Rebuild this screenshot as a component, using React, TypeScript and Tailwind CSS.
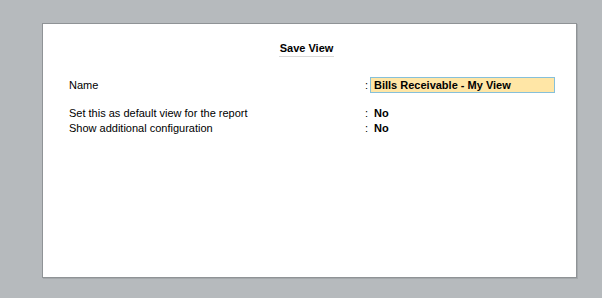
import React from "react";

export default function App() {
  const font = { fontFamily: '"Liberation Sans", Arial, sans-serif' };
  return (
    <div className="w-[602px] h-[298px] bg-[#b6babd] pt-[23px] pl-[42px]" style={font}>
      <div className="w-[535px] h-[255px] bg-white border border-[#8f9396] shadow-[1px_1px_0_#a4a8ab] flex flex-col">
        <div className="flex justify-center pt-[17px]">
          <div className="text-[11px] font-bold text-black leading-[14px] pb-[1px] border-b border-[#d9d9d9] px-[1px] -ml-[6px]">
            Save View
          </div>
        </div>
        <div className="flex flex-col pl-[26px] pt-[20px] text-[11px] text-black leading-[15px]">
          <div className="flex items-center h-[16px]">
            <div className="w-[296px]">Name</div>
            <div className="w-[4px]">:</div>
            <div className="ml-[1px] w-[185px] h-[16px] bg-[#ffe6a6] border border-[#86c0da] font-bold pl-[3px] flex items-center">
              Bills Receivable - My View
            </div>
          </div>
          <div className="flex items-center mt-[13px]">
            <div className="w-[296px]">Set this as default view for the report</div>
            <div className="w-[4px]">:</div>
            <div className="ml-[5px] font-bold">No</div>
          </div>
          <div className="flex items-center">
            <div className="w-[296px]">Show additional configuration</div>
            <div className="w-[4px]">:</div>
            <div className="ml-[5px] font-bold">No</div>
          </div>
        </div>
      </div>
    </div>
  );
}
